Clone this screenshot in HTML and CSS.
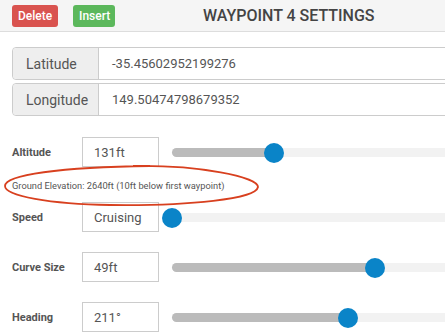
FILE: index.html
```html
<!DOCTYPE html>
<html lang="en">
<head>
  <meta charset="UTF-8" />
  <title>Waypoint Settings</title>
  <link rel="stylesheet" href="styles.css">
</head>
<body>
  <header class="panel-head">
    <button class="btn btn-delete">Delete</button>
    <button class="btn btn-insert">Insert</button>
    <h1 class="panel-title">WAYPOINT 4 SETTINGS</h1>
  </header>

  <div class="panel-body">
    <div class="coord-group">
      <span class="addon">Latitude</span>
      <span class="coord-value">-35.45602952199276</span>
    </div>
    <div class="coord-group">
      <span class="addon">Longitude</span>
      <span class="coord-value">149.50474798679352</span>
    </div>

    <div class="setting setting-first">
      <label class="setting-label">Altitude</label>
      <div class="setting-input">131ft</div>
      <div class="slider">
        <div class="slider-fill" style="width: 102px"></div>
        <div class="slider-thumb" style="left: 102px"></div>
      </div>
    </div>
    <div class="note-wrap">
      <div class="note">Ground Elevation: 2640ft (10ft below first waypoint)</div>
      <svg class="circle-mark" width="270" height="50" viewBox="0 0 270 50">
        <path d="M133 3 C 200 2, 258 14, 258 24 C 256 36, 190 43, 110 42 C 50 41, 5 33, 5 23 C 5 12, 60 4, 150 3"
              fill="none" stroke="#d8401f" stroke-width="1.8"/>
      </svg>
    </div>
    <div class="setting setting-after-note">
      <label class="setting-label">Speed</label>
      <div class="setting-input">Cruising</div>
      <div class="slider">
        <div class="slider-fill" style="width: 0px"></div>
        <div class="slider-thumb" style="left: 0px"></div>
      </div>
    </div>
    <div class="setting">
      <label class="setting-label">Curve Size</label>
      <div class="setting-input">49ft</div>
      <div class="slider">
        <div class="slider-fill" style="width: 203px"></div>
        <div class="slider-thumb" style="left: 203px"></div>
      </div>
    </div>
    <div class="setting">
      <label class="setting-label">Heading</label>
      <div class="setting-input">211°</div>
      <div class="slider">
        <div class="slider-fill" style="width: 176px"></div>
        <div class="slider-thumb" style="left: 176px"></div>
      </div>
    </div>
  </div>
</body>
</html>
```

FILE: styles.css
```css
html, body {
  margin: 0;
  font-family: Roboto, "Liberation Sans", sans-serif;
  background-color: white;
  color: #555;
  overflow: hidden;
}
.panel-head {
  display: flex;
  align-items: center;
  height: 32px;
  padding: 0 12px;
  background-color: #f5f5f5;
  border-bottom: 1px solid #ddd;
  box-sizing: border-box;
  width: 600px;
}
.btn {
  height: 22px;
  padding: 0 6px;
  border: none;
  border-radius: 3px;
  color: white;
  font-family: Roboto, "Liberation Sans", sans-serif;
  font-size: 12px;
  font-weight: 500;
}
.btn-delete {
  width: 46px;
  background-color: #d9534f;
}
.btn-insert {
  width: 42px;
  margin-left: 15px;
  background-color: #5cb85c;
}
.panel-title {
  margin: 0 0 0 88px;
  font-size: 16px;
  font-weight: 500;
  color: #444;
}

.panel-body {
  width: 600px;
  padding: 15px 12px 0;
}
.coord-group {
  display: flex;
  height: 33px;
  margin-bottom: 3px;
  border: 1px solid #ccc;
  border-radius: 4px;
  box-sizing: border-box;
  font-size: 14px;
}
.addon {
  display: flex;
  align-items: center;
  flex: 0 0 86px;
  padding-left: 13px;
  box-sizing: border-box;
  background-color: #eee;
  border-right: 1px solid #ccc;
  border-radius: 4px 0 0 4px;
}
.coord-value {
  display: flex;
  align-items: center;
  padding-left: 13px;
  font-size: 13px;
}

.setting {
  display: flex;
  align-items: center;
  height: 30px;
  margin-top: 20px;
}
.setting-first {
  margin-top: 21px;
}
.setting-after-note {
  margin-top: 0;
}
.setting-label {
  width: 70px;
  font-size: 11px;
  font-weight: bold;
  color: #555;
}
.setting-input {
  display: flex;
  align-items: center;
  width: 77px;
  height: 30px;
  padding-left: 11px;
  box-sizing: border-box;
  border: 1px solid #ccc;
  font-size: 13px;
}
.slider {
  position: relative;
  width: 330px;
  height: 9px;
  margin-left: 13px;
  background-color: #f2f2f2;
  border-radius: 5px;
}
.slider-fill {
  height: 100%;
  background-color: #bbb;
  border-radius: 5px 0 0 5px;
}
.slider-thumb {
  position: absolute;
  top: -5px;
  width: 20px;
  height: 20px;
  margin-left: -10px;
  border-radius: 50%;
  background-color: #0a84c8;
}

.note-wrap {
  position: relative;
  height: 35px;
}
.note {
  padding-top: 13px;
  font-size: 9.3px;
  color: #555;
}
.circle-mark {
  position: absolute;
  left: -12px;
  top: -4px;
}
```
